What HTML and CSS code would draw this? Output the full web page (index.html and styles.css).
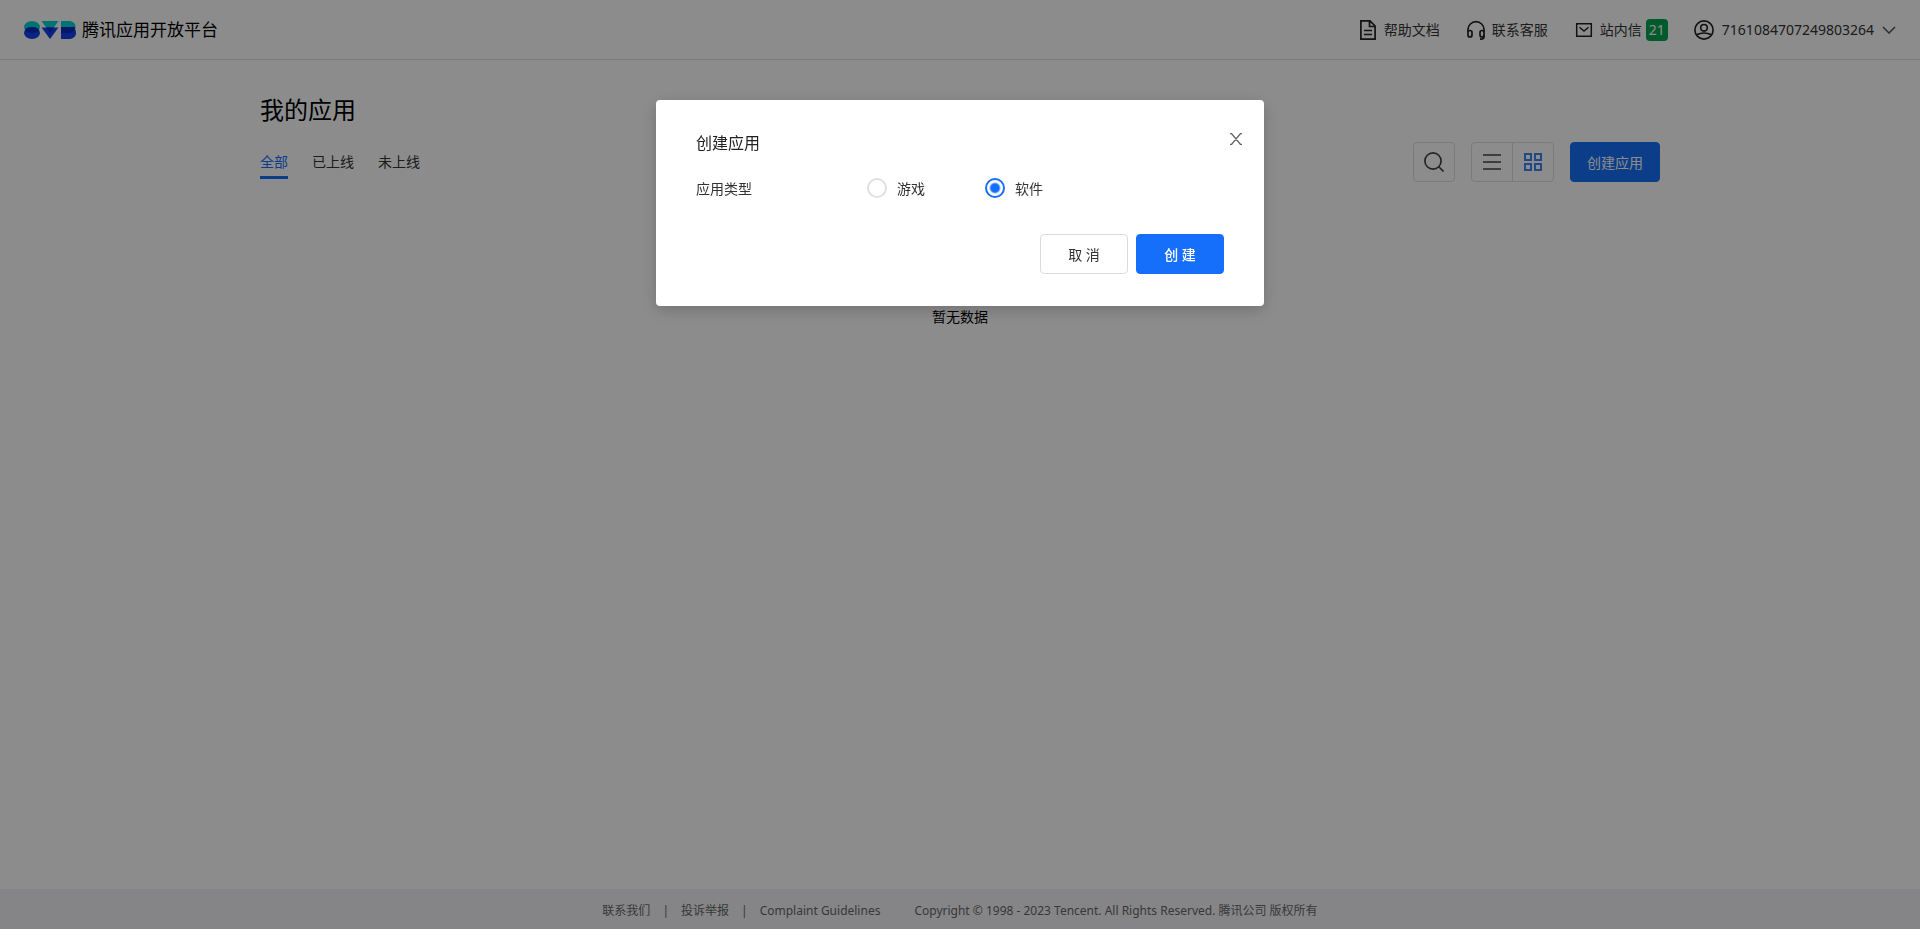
FILE: index.html
```html
<!DOCTYPE html>
<html lang="zh-CN">
<head>
<meta charset="utf-8">
<title>腾讯应用开放平台</title>
<link rel="stylesheet" href="styles.css">
</head>
<body>
<div class="page">
  <header class="header">
    <a class="brand" href="#">
      <svg class="brand-logo" width="52" height="18" viewBox="0 0 52 18" aria-hidden="true">
        <rect x="0" y="0" width="16" height="12" rx="8" ry="6" fill="#00d2d2"/>
        <rect x="0" y="6" width="16" height="12" rx="8" ry="6" fill="#1540ee"/>
        <ellipse cx="8" cy="9" rx="7" ry="3" fill="#0d2cc4"/>
        <path d="M17.500 0H34.500L26 12Z" fill="#00d2d2"/>
        <path d="M17.500 6.500H34.500L26 18Z" fill="#1540ee"/>
        <path d="M22 6.500H30L26 12Z" fill="#0d2cc4"/>
        <path d="M37 0H45C49 0 51.500 2.500 51.500 6S49 12 45 12H37Z" fill="#00d2d2"/>
        <path d="M37 6H46C50 6 52 8.500 52 12S49 18 45 18H37Z" fill="#1540ee"/>
        <path d="M37 6H51C51 10 48 12 45 12H37Z" fill="#0d2cc4"/>
      </svg>
      <span class="brand-name">腾讯应用开放平台</span>
    </a>
    <nav class="header-nav">
      <a class="nav-link" href="#">
        <svg width="20" height="20" viewBox="0 0 20 20" fill="none" stroke="#222" stroke-width="1.700" aria-hidden="true"><path d="M2.900 .9H12L17.100 6V19.100H2.900ZM11.500 1V6.500H17M6 10.500H14M6 14.500H14"/></svg>
        帮助文档
      </a>
      <a class="nav-link" href="#">
        <svg width="20" height="20" viewBox="0 0 20 20" fill="none" stroke="#222" stroke-width="1.700" aria-hidden="true"><path d="M2 12V9.500A8 7.800 0 0 1 18 9.500V12"/><rect x="2" y="10.500" width="4" height="6.500" rx="2"/><rect x="14" y="10.500" width="4" height="6.500" rx="2"/><path d="M18 14.500V17Q18 19.200 14 19.200"/></svg>
        联系客服
      </a>
      <a class="nav-link" href="#">
        <svg width="20" height="20" viewBox="0 0 20 20" fill="none" stroke="#222" stroke-width="1.500" aria-hidden="true"><path d="M2.700 3.800H17.300V16.200H2.700ZM5.500 7.200L10 11L14.500 7.200"/></svg>
        站内信<span class="badge">21</span>
      </a>
      <button class="account" type="button">
        <svg width="20" height="20" viewBox="0 0 20 20" fill="none" stroke="#222" stroke-width="1.600" aria-hidden="true"><circle cx="10" cy="10" r="9.100"/><circle cx="10" cy="7.800" r="3.300"/><path d="M2.800 14.700C5 13.400 7.500 13 10 13S15 13.400 17.200 14.700"/></svg>
        <span>7161084707249803264</span>
        <svg width="14" height="8" viewBox="0 0 14 8" fill="none" stroke="#555" stroke-width="1.500" aria-hidden="true"><path d="M1 1L7 7L13 1"/></svg>
      </button>
    </nav>
  </header>

  <main class="content">
    <h1 class="page-title">我的应用</h1>
    <div class="toolbar">
      <nav class="tabs">
        <a class="tab tab-active" href="#">全部</a>
        <a class="tab" href="#">已上线</a>
        <a class="tab" href="#">未上线</a>
      </nav>
      <div class="actions">
        <button class="icon-button bordered" type="button" aria-label="搜索">
          <svg width="20" height="20" viewBox="0 0 20 20" fill="none" stroke="#444" stroke-width="1.700" aria-hidden="true"><circle cx="9" cy="9" r="8.100"/><path d="M14.500 14.500L19.500 19.500"/></svg>
        </button>
        <div class="view-switch bordered">
          <button class="icon-button" type="button" aria-label="列表视图">
            <svg width="18" height="18" viewBox="0 0 18 18" fill="none" stroke="#444" stroke-width="1.700" aria-hidden="true"><path d="M0 2H18M0 9H18M0 16H18"/></svg>
          </button>
          <button class="icon-button" type="button" aria-label="网格视图">
            <svg width="18" height="18" viewBox="0 0 18 18" fill="none" stroke="#3f84f5" stroke-width="2" aria-hidden="true"><path d="M1 1H7V7H1ZM11 1H17V7H11ZM1 11H7V17H1ZM11 11H17V17H11Z"/></svg>
          </button>
        </div>
        <button class="button button-primary" type="button">创建应用</button>
      </div>
    </div>
    <p class="empty">暂无数据</p>
  </main>

  <footer class="footer">
    <a href="#">联系我们</a>
    <span class="divider">|</span>
    <a href="#">投诉举报</a>
    <span class="divider">|</span>
    <a href="#">Complaint Guidelines</a>
    <span class="copyright">Copyright © 1998 - 2023 Tencent. All Rights Reserved. 腾讯公司 版权所有</span>
  </footer>
</div>

<div class="mask">
  <form class="modal" role="dialog" aria-modal="true" aria-labelledby="modal-title">
    <button class="close" type="button" aria-label="关闭">
      <svg width="12" height="12" viewBox="0 0 12 12" fill="none" stroke="#666" stroke-width="1.400" aria-hidden="true"><path d="M0 .6H1.500L10.500 11.400H12M12 .6H10.500L1.500 11.400H0"/></svg>
    </button>
    <h2 class="modal-title" id="modal-title">创建应用</h2>
    <div class="field" role="radiogroup" aria-labelledby="type-label">
      <span class="field-label" id="type-label">应用类型</span>
      <label class="option"><input class="radio" type="radio" name="type">游戏</label>
      <label class="option"><input class="radio" type="radio" name="type" checked>软件</label>
    </div>
    <div class="modal-actions">
      <button class="button button-plain" type="button">取 消</button>
      <button class="button button-primary button-strong" type="button">创 建</button>
    </div>
  </form>
</div>
</body>
</html>
```
FILE: styles.css
```css
* {
  box-sizing: border-box;
}

body {
  margin: 0;
  color: #333;
  background: #fff;
  font: 14px/22px "Noto Sans", "Noto Sans CJK SC", sans-serif;
}

a {
  color: inherit;
  text-decoration: none;
}

button {
  padding: 0;
  border: 0;
  color: inherit;
  background: none;
  font: inherit;
  cursor: pointer;
}

svg {
  flex: none;
}

.page {
  display: flex;
  flex-direction: column;
  min-height: 100vh;
}

.header {
  display: flex;
  align-items: center;
  justify-content: space-between;
  height: 60px;
  padding: 0 24px;
  border-bottom: 1px solid #dcdcdc;
}

.brand {
  display: flex;
  align-items: center;
  gap: 6px;
  color: #000;
  font-size: 17px;
}

.header-nav,
.nav-link,
.account {
  display: flex;
  align-items: center;
}

.header-nav {
  gap: 26px;
}

.nav-link {
  gap: 6px;
}

.account {
  gap: 8px;
}

.badge {
  min-width: 22px;
  border-radius: 4px;
  margin-left: -2px;
  color: #fff;
  background: #00a54f;
  text-align: center;
}

.content {
  flex: 1;
  width: 100%;
  max-width: 1448px;
  margin: 0 auto;
  padding: 32px 24px;
}

.page-title {
  margin: 0;
  color: #000;
  font-size: 24px;
  font-weight: 400;
  line-height: 36px;
}

.toolbar {
  display: flex;
  align-items: center;
  justify-content: space-between;
  margin-top: 14px;
}

.tabs {
  display: flex;
  gap: 24px;
}

.tab {
  padding: 4px 0 2px;
  border-bottom: 3px solid transparent;
  line-height: 24px;
}

.tab-active {
  border-color: #156ffa;
  color: #156ffa;
}

.actions {
  display: flex;
  gap: 16px;
}

.bordered {
  border: 1px solid #dcdee2;
  border-radius: 4px;
}

.icon-button {
  display: flex;
  align-items: center;
  justify-content: center;
  width: 42px;
}

.view-switch {
  display: flex;
}

.view-switch .icon-button {
  width: 40px;
}

.view-switch .icon-button + .icon-button {
  width: 41px;
  border-left: 1px solid #dcdee2;
}

.button {
  min-width: 88px;
  height: 40px;
  padding: 2px 16px 0;
  border: 1px solid #dcdcdc;
  border-radius: 4px;
}

.button-primary {
  border-color: #156ffa;
  color: #fff;
  background: #156ffa;
}

.button-strong {
  font-weight: 500;
}

.empty {
  margin: 124px 0 0;
  color: #000;
  text-align: center;
}

.footer {
  display: flex;
  align-items: center;
  justify-content: center;
  height: 40px;
  padding-top: 4px;
  color: #666;
  background: #f3f3f6;
  font-size: 12px;
}

.divider {
  margin: 0 12px;
}

.copyright {
  margin-left: 34px;
}

.mask {
  position: fixed;
  inset: 0;
  padding: 100px 24px 0;
  background: rgba(0, 0, 0, 0.45);
}

.modal {
  position: relative;
  max-width: 608px;
  margin: 0 auto;
  padding: 32px 40px;
  border-radius: 4px;
  background: #fff;
  box-shadow: 0 4px 16px rgba(0, 0, 0, 0.2);
}

.close {
  position: absolute;
  top: 28px;
  right: 18px;
  display: flex;
  align-items: center;
  justify-content: center;
  width: 20px;
  height: 22px;
}

.modal-title {
  margin: 0;
  color: #222;
  font-size: 16px;
  font-weight: 400;
  line-height: 22px;
}

.field {
  display: flex;
  align-items: center;
  margin-top: 24px;
}

.field-label {
  width: 171px;
}

.option {
  display: flex;
  align-items: flex-start;
  gap: 10px;
  width: 118px;
}

.radio {
  appearance: none;
  width: 20px;
  height: 20px;
  margin: 0;
  border: 2px solid #e0e0e0;
  border-radius: 50%;
}

.radio:checked {
  border-color: #156ffa;
  background: radial-gradient(circle, #156ffa 4px, transparent 6px);
}

.modal-actions {
  display: flex;
  justify-content: flex-end;
  gap: 8px;
  margin-top: 34px;
}
```
